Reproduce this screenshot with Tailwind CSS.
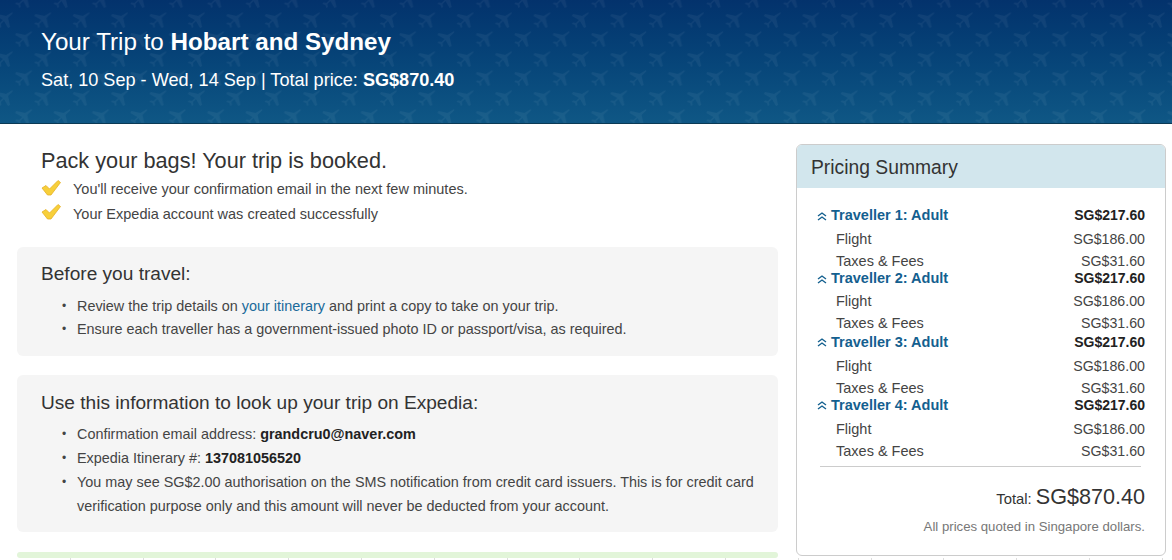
<!DOCTYPE html>
<html lang="en">
<head>
  <meta charset="UTF-8" />
  <title>Your Trip to Hobart and Sydney</title>
  <script src="https://cdn.jsdelivr.net/npm/@tailwindcss/browser@4"></script>
</head>
<body class="relative bg-white h-[560px] overflow-hidden font-['Liberation_Sans',Arial,sans-serif] text-[#333]">

  <!-- Header -->
  <header class="relative h-[124px] bg-gradient-to-b from-[#03326c] to-[#0f5785] border-b border-[#0b3a55] overflow-hidden">
    <svg class="absolute inset-0 w-full h-full" aria-hidden="true">
      <defs>
        <path id="plane" d="M7 -7 C8 -8 9 -8 8.5 -6.5 L4 -2 L6 7 L4 8 L0 1 L-3 4 L-2.6 7 L-4 8 L-5 5 L-8 4 L-7 2.6 L-4 3 L-1 0 L-8 -4 L-7 -6 L2 -4 Z"/>
        <pattern id="planes" x="4" y="0" width="38.4" height="39" patternUnits="userSpaceOnUse">
          <use href="#plane" x="0" y="20" fill="#fff" fill-opacity="0.05"/>
          <use href="#plane" x="38.4" y="20" fill="#fff" fill-opacity="0.05"/>
          <use href="#plane" x="19.2" y="0" fill="#fff" fill-opacity="0.05"/>
          <use href="#plane" x="19.2" y="39" fill="#fff" fill-opacity="0.05"/>
        </pattern>
      </defs>
      <rect width="100%" height="100%" fill="url(#planes)"/>
    </svg>
    <div class="relative pl-[41px] pt-[27px] text-white">
      <h1 class="text-[24.2px] leading-[30px]">Your Trip to <b>Hobart and Sydney</b></h1>
      <p class="mt-[11px] text-[18.1px] leading-[24px]">Sat, 10 Sep - Wed, 14 Sep | Total price: <b>SG$870.40</b></p>
    </div>
  </header>

  <div class="flex">
    <!-- Left column -->
    <main class="w-[778px] pl-[17px] shrink-0">
      <section class="pl-[24px] pt-[24px]">
        <h2 class="text-[21.7px] leading-[26px]">Pack your bags! Your trip is booked.</h2>
        <ul class="mt-[4px] text-[14.5px] text-[#444]">
          <li class="flex items-center h-[24.5px]">
            <svg class="w-[20px] h-[18px] mr-[12px] -mt-[5px]" viewBox="0 0 20 18"><path d="M1 9 L5 6.5 L8.5 10 L17 1.5 L19.5 3.5 L10 16 L6.5 16 Z" fill="#f7cf3a" stroke="#e6b026" stroke-width="0.8" stroke-linejoin="round"/></svg>
            You'll receive your confirmation email in the next few minutes.
          </li>
          <li class="flex items-center h-[24.5px]">
            <svg class="w-[20px] h-[18px] mr-[12px] -mt-[5px]" viewBox="0 0 20 18"><path d="M1 9 L5 6.5 L8.5 10 L17 1.5 L19.5 3.5 L10 16 L6.5 16 Z" fill="#f7cf3a" stroke="#e6b026" stroke-width="0.8" stroke-linejoin="round"/></svg>
            Your Expedia account was created successfully
          </li>
        </ul>
      </section>

      <section class="mt-[20px] h-[109px] bg-[#f5f5f5] rounded-md pl-[24px] pt-[15px]">
        <h3 class="text-[19.1px] leading-[24px]">Before you travel:</h3>
        <ul class="mt-[9px] text-[14.4px] leading-[23px] text-[#444]">
          <li class="flex"><span class="w-[36px] pl-[21px] text-[12px]">•</span><span>Review the trip details on <a class="text-[#1a6a9a]">your itinerary</a> and print a copy to take on your trip.</span></li>
          <li class="flex"><span class="w-[36px] pl-[21px] text-[12px]">•</span><span>Ensure each traveller has a government-issued photo ID or passport/visa, as required.</span></li>
        </ul>
      </section>

      <section class="mt-[19px] h-[157px] bg-[#f5f5f5] rounded-md pl-[24px] pt-[16px]">
        <h3 class="text-[19.1px] leading-[24px]">Use this information to look up your trip on Expedia:</h3>
        <ul class="mt-[7px] text-[14.4px] leading-[24px] text-[#444]">
          <li class="flex"><span class="w-[36px] pl-[21px] text-[12px]">•</span><span>Confirmation email address: <b class="text-[#222]">grandcru0@naver.com</b></span></li>
          <li class="flex"><span class="w-[36px] pl-[21px] text-[12px]">•</span><span>Expedia Itinerary #: <b class="text-[#222]">137081056520</b></span></li>
          <li class="flex"><span class="w-[36px] pl-[21px] text-[12px] shrink-0">•</span><span class="w-[690px]">You may see SG$2.00 authorisation on the SMS notification from credit card issuers. This is for credit card verification purpose only and this amount will never be deducted from your account.</span></li>
        </ul>
      </section>

      <section class="mt-[20px] h-[6px] bg-[#e2f5d9] rounded-sm"></section>
    </main>

    <!-- Pricing summary -->
    <aside class="ml-[18px] mt-[20px] w-[370px] h-[412px] border border-[#ccc] rounded-md overflow-hidden shrink-0">
      <h2 class="h-[43px] bg-[#d2e6ed] pl-[14px] text-[19.3px] leading-[46px]">Pricing Summary</h2>
      <div class="pl-[20px] pr-[20px] pt-[15px] text-[14.5px]">
        <div class="h-[63.3px]">
          <div class="flex justify-between font-bold leading-[25px]"><span class="text-[#14608f] flex items-center"><svg class="w-[10px] h-[10px] mr-[4px]" viewBox="0 0 10 10" fill="none" stroke="#14608f" stroke-width="1.4"><path d="M1 5 L5 2 L9 5 M1 9 L5 6 L9 9"/></svg>Traveller 1: Adult</span><span class="text-[#222] text-[14px]">SG$217.60</span></div>
          <div class="flex justify-between leading-[22px] text-[#444] pl-[19px]"><span>Flight</span><span class="text-[14.2px]">SG$186.00</span></div>
          <div class="flex justify-between leading-[22px] text-[#444] pl-[19px]"><span>Taxes &amp; Fees</span><span class="text-[14.2px]">SG$31.60</span></div>
        </div>
        <div class="h-[63.3px]">
          <div class="flex justify-between font-bold leading-[25px]"><span class="text-[#14608f] flex items-center"><svg class="w-[10px] h-[10px] mr-[4px]" viewBox="0 0 10 10" fill="none" stroke="#14608f" stroke-width="1.4"><path d="M1 5 L5 2 L9 5 M1 9 L5 6 L9 9"/></svg>Traveller 2: Adult</span><span class="text-[#222] text-[14px]">SG$217.60</span></div>
          <div class="flex justify-between leading-[21.5px] text-[#444] pl-[19px]"><span>Flight</span><span class="text-[14.2px]">SG$186.00</span></div>
          <div class="flex justify-between leading-[21.5px] text-[#444] pl-[19px]"><span>Taxes &amp; Fees</span><span class="text-[14.2px]">SG$31.60</span></div>
        </div>
        <div class="h-[63.3px]">
          <div class="flex justify-between font-bold leading-[25px]"><span class="text-[#14608f] flex items-center"><svg class="w-[10px] h-[10px] mr-[4px]" viewBox="0 0 10 10" fill="none" stroke="#14608f" stroke-width="1.4"><path d="M1 5 L5 2 L9 5 M1 9 L5 6 L9 9"/></svg>Traveller 3: Adult</span><span class="text-[#222] text-[14px]">SG$217.60</span></div>
          <div class="flex justify-between leading-[22px] text-[#444] pl-[19px]"><span>Flight</span><span class="text-[14.2px]">SG$186.00</span></div>
          <div class="flex justify-between leading-[22px] text-[#444] pl-[19px]"><span>Taxes &amp; Fees</span><span class="text-[14.2px]">SG$31.60</span></div>
        </div>
        <div>
          <div class="flex justify-between font-bold leading-[25px]"><span class="text-[#14608f] flex items-center"><svg class="w-[10px] h-[10px] mr-[4px]" viewBox="0 0 10 10" fill="none" stroke="#14608f" stroke-width="1.4"><path d="M1 5 L5 2 L9 5 M1 9 L5 6 L9 9"/></svg>Traveller 4: Adult</span><span class="text-[#222] text-[14px]">SG$217.60</span></div>
          <div class="flex justify-between leading-[22px] text-[#444] pl-[19px]"><span>Flight</span><span class="text-[14.2px]">SG$186.00</span></div>
          <div class="flex justify-between leading-[22px] text-[#444] pl-[19px]"><span>Taxes &amp; Fees</span><span class="text-[14.2px]">SG$31.60</span></div>
        </div>
        <div class="mt-[4px] mr-[4px] ml-[3px] border-t border-[#ccc]"></div>
        <p class="mt-[15px] text-right leading-[30px] text-[#333]"><span class="text-[14.8px]">Total:</span> <span class="text-[21.6px]">SG$870.40</span></p>
        <p class="mt-[4px] text-right text-[13.2px] leading-[18px] text-[#777]">All prices quoted in Singapore dollars.</p>
      </div>
    </aside>
  </div>

  <!-- ticks along the bottom edge -->
  <div class="absolute left-[-2px] bottom-0 flex h-[2px]">
    <i class="w-[72.8px] border-r border-[#ddd]"></i><i class="w-[72.8px] border-r border-[#ddd]"></i><i class="w-[72.8px] border-r border-[#ddd]"></i><i class="w-[72.8px] border-r border-[#ddd]"></i>
    <i class="w-[72.8px] border-r border-[#ddd]"></i><i class="w-[72.8px] border-r border-[#ddd]"></i><i class="w-[72.8px] border-r border-[#ddd]"></i><i class="w-[72.8px] border-r border-[#ddd]"></i>
    <i class="w-[72.8px] border-r border-[#ddd]"></i><i class="w-[72.8px] border-r border-[#ddd]"></i><i class="w-[72.8px] border-r border-[#ddd]"></i><i class="w-[72.8px] border-r border-[#ddd]"></i>
    <i class="w-[72.8px] border-r border-[#ddd]"></i><i class="w-[72.8px] border-r border-[#ddd]"></i><i class="w-[72.8px] border-r border-[#ddd]"></i><i class="w-[72.8px] border-r border-[#ddd]"></i>
  </div>
</body>
</html>
